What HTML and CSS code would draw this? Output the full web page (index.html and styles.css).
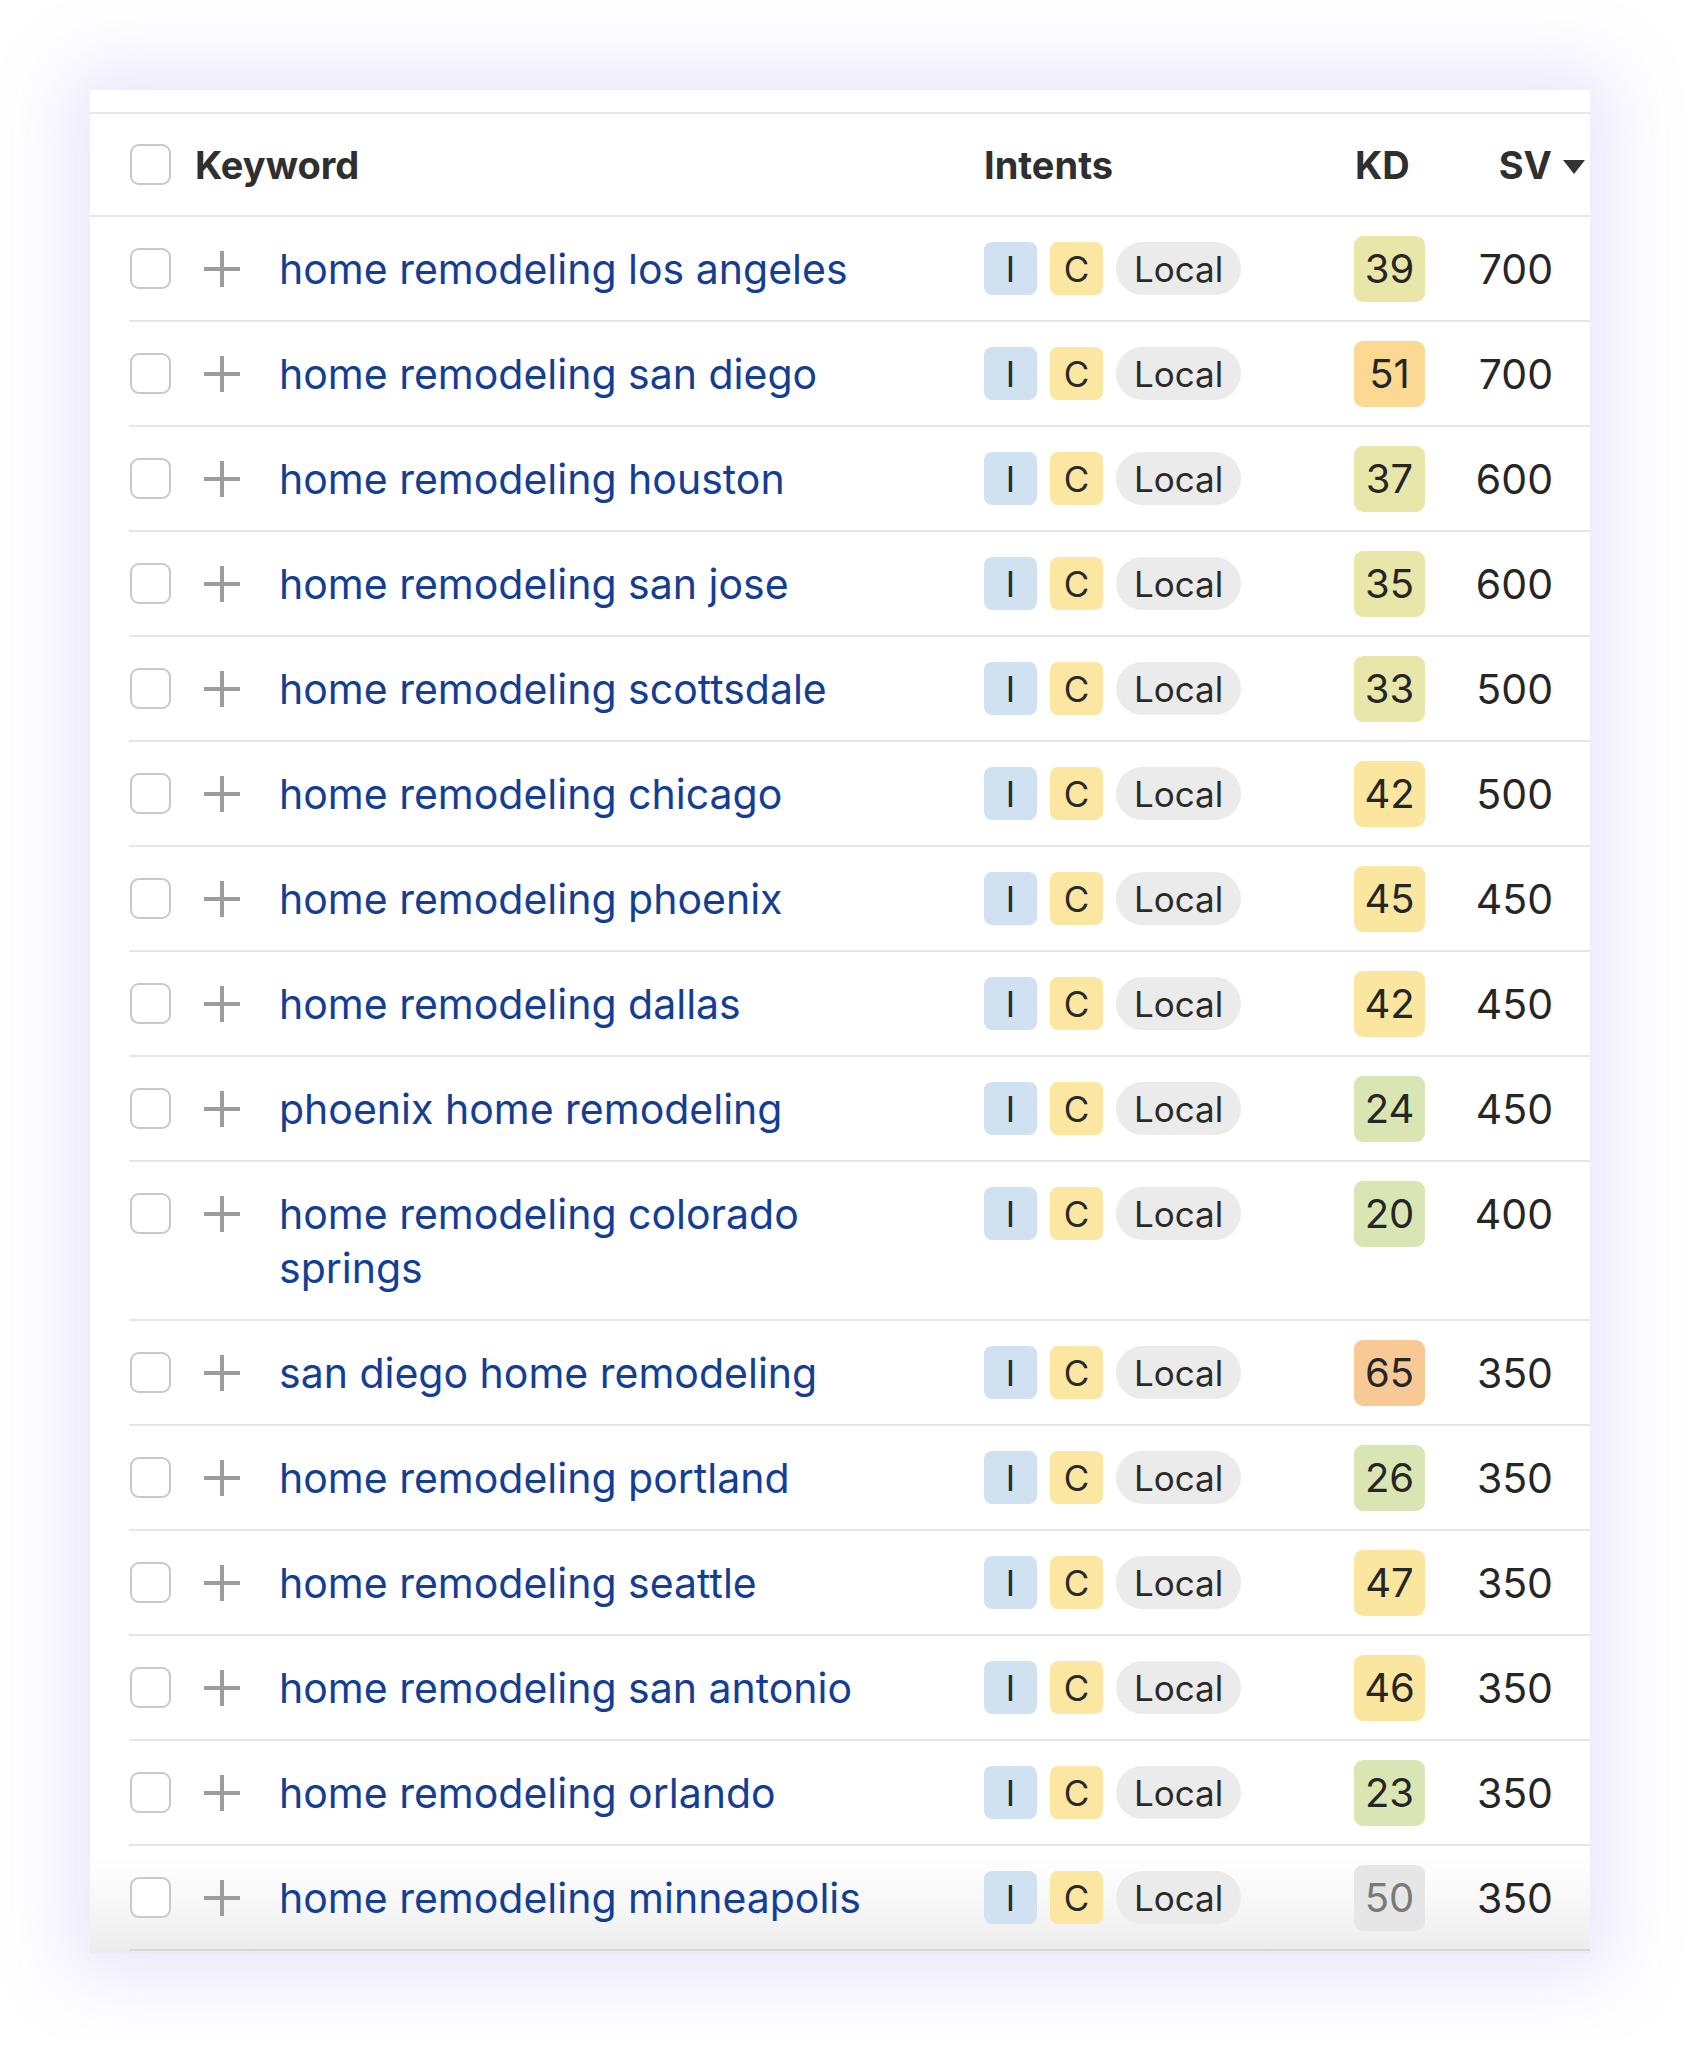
FILE: index.html
```html
<!DOCTYPE html>
<html lang="en">
<head>
<meta charset="utf-8">
<title>Keywords</title>
<link rel="stylesheet" href="styles.css">
</head>
<body>
<div class="card">
  <div class="strip"></div>
  <div class="head">
    <span class="cb"></span>
    <div class="h-kw">Keyword</div>
    <div class="h-int">Intents</div>
    <div class="h-kd">KD</div>
    <div class="h-sv">SV<span class="tri"></span></div>
  </div>
  <div class="rows">
    <div class="row"><div class="c-cb"><span class="cb"></span></div><div class="c-plus"><span class="plus"></span></div><div class="kw">home remodeling los angeles</div><div class="ints"><span class="chip i">I</span><span class="chip c">C</span><span class="chip l">Local</span></div><div class="kd"><span class="badge k3">39</span></div><div class="sv">700</div></div>
    <div class="row"><div class="c-cb"><span class="cb"></span></div><div class="c-plus"><span class="plus"></span></div><div class="kw">home remodeling san diego</div><div class="ints"><span class="chip i">I</span><span class="chip c">C</span><span class="chip l">Local</span></div><div class="kd"><span class="badge k5">51</span></div><div class="sv">700</div></div>
    <div class="row"><div class="c-cb"><span class="cb"></span></div><div class="c-plus"><span class="plus"></span></div><div class="kw">home remodeling houston</div><div class="ints"><span class="chip i">I</span><span class="chip c">C</span><span class="chip l">Local</span></div><div class="kd"><span class="badge k3">37</span></div><div class="sv">600</div></div>
    <div class="row"><div class="c-cb"><span class="cb"></span></div><div class="c-plus"><span class="plus"></span></div><div class="kw">home remodeling san jose</div><div class="ints"><span class="chip i">I</span><span class="chip c">C</span><span class="chip l">Local</span></div><div class="kd"><span class="badge k3">35</span></div><div class="sv">600</div></div>
    <div class="row"><div class="c-cb"><span class="cb"></span></div><div class="c-plus"><span class="plus"></span></div><div class="kw">home remodeling scottsdale</div><div class="ints"><span class="chip i">I</span><span class="chip c">C</span><span class="chip l">Local</span></div><div class="kd"><span class="badge k3">33</span></div><div class="sv">500</div></div>
    <div class="row"><div class="c-cb"><span class="cb"></span></div><div class="c-plus"><span class="plus"></span></div><div class="kw">home remodeling chicago</div><div class="ints"><span class="chip i">I</span><span class="chip c">C</span><span class="chip l">Local</span></div><div class="kd"><span class="badge k4">42</span></div><div class="sv">500</div></div>
    <div class="row"><div class="c-cb"><span class="cb"></span></div><div class="c-plus"><span class="plus"></span></div><div class="kw">home remodeling phoenix</div><div class="ints"><span class="chip i">I</span><span class="chip c">C</span><span class="chip l">Local</span></div><div class="kd"><span class="badge k4">45</span></div><div class="sv">450</div></div>
    <div class="row"><div class="c-cb"><span class="cb"></span></div><div class="c-plus"><span class="plus"></span></div><div class="kw">home remodeling dallas</div><div class="ints"><span class="chip i">I</span><span class="chip c">C</span><span class="chip l">Local</span></div><div class="kd"><span class="badge k4">42</span></div><div class="sv">450</div></div>
    <div class="row"><div class="c-cb"><span class="cb"></span></div><div class="c-plus"><span class="plus"></span></div><div class="kw">phoenix home remodeling</div><div class="ints"><span class="chip i">I</span><span class="chip c">C</span><span class="chip l">Local</span></div><div class="kd"><span class="badge k2">24</span></div><div class="sv">450</div></div>
    <div class="row"><div class="c-cb"><span class="cb"></span></div><div class="c-plus"><span class="plus"></span></div><div class="kw">home remodeling colorado springs</div><div class="ints"><span class="chip i">I</span><span class="chip c">C</span><span class="chip l">Local</span></div><div class="kd"><span class="badge k2">20</span></div><div class="sv">400</div></div>
    <div class="row"><div class="c-cb"><span class="cb"></span></div><div class="c-plus"><span class="plus"></span></div><div class="kw">san diego home remodeling</div><div class="ints"><span class="chip i">I</span><span class="chip c">C</span><span class="chip l">Local</span></div><div class="kd"><span class="badge k6">65</span></div><div class="sv">350</div></div>
    <div class="row"><div class="c-cb"><span class="cb"></span></div><div class="c-plus"><span class="plus"></span></div><div class="kw">home remodeling portland</div><div class="ints"><span class="chip i">I</span><span class="chip c">C</span><span class="chip l">Local</span></div><div class="kd"><span class="badge k2">26</span></div><div class="sv">350</div></div>
    <div class="row"><div class="c-cb"><span class="cb"></span></div><div class="c-plus"><span class="plus"></span></div><div class="kw">home remodeling seattle</div><div class="ints"><span class="chip i">I</span><span class="chip c">C</span><span class="chip l">Local</span></div><div class="kd"><span class="badge k4">47</span></div><div class="sv">350</div></div>
    <div class="row"><div class="c-cb"><span class="cb"></span></div><div class="c-plus"><span class="plus"></span></div><div class="kw">home remodeling san antonio</div><div class="ints"><span class="chip i">I</span><span class="chip c">C</span><span class="chip l">Local</span></div><div class="kd"><span class="badge k4">46</span></div><div class="sv">350</div></div>
    <div class="row"><div class="c-cb"><span class="cb"></span></div><div class="c-plus"><span class="plus"></span></div><div class="kw">home remodeling orlando</div><div class="ints"><span class="chip i">I</span><span class="chip c">C</span><span class="chip l">Local</span></div><div class="kd"><span class="badge k2">23</span></div><div class="sv">350</div></div>
    <div class="row last"><div class="c-cb"><span class="cb"></span></div><div class="c-plus"><span class="plus"></span></div><div class="kw">home remodeling minneapolis</div><div class="ints"><span class="chip i">I</span><span class="chip c">C</span><span class="chip l">Local</span></div><div class="kd"><span class="badge kg">50</span></div><div class="sv">350</div></div>
  </div>
</div>
</body>
</html>
```

FILE: styles.css
```css
* { box-sizing: border-box; }
html, body { margin: 0; background: #ffffff; }
body {
  padding: 90px 110px 90px 90px;
  font-family: "Inter", "Roboto", "Liberation Sans", sans-serif;
  color: #2c2c2c;
}
.card {
  width: 1500px;
  padding-bottom: 3px;
  background: linear-gradient(to bottom, #ffffff 0, #ffffff calc(100% - 100px), #f7f7f7 calc(100% - 50px), #ececec 100%);
  box-shadow: 0 0 70px 24px rgba(145, 115, 245, 0.18);
}
.strip { height: 22px; }
.head {
  display: flex;
  align-items: center;
  height: 105px;
  padding-left: 40px;
  border-top: 2px solid #e8e8e8;
  border-bottom: 2px solid #e8e8e8;
  font-weight: 700;
  font-size: 38px;
  color: #2f2f2f;
}
.cb {
  display: block;
  width: 41px;
  height: 41px;
  border: 2px solid #c9c9c9;
  border-radius: 9px;
  background: #fff;
}
.h-kw { margin-left: 24px; width: 789px; }
.h-int { width: 371px; }
.h-kd { width: 100px; }
.h-sv {
  flex: 1;
  display: flex;
  align-items: center;
  justify-content: flex-end;
  padding-right: 5px;
}
.tri {
  width: 0;
  height: 0;
  margin-left: 11px;
  margin-top: 4px;
  border-left: 11px solid transparent;
  border-right: 11px solid transparent;
  border-top: 14px solid #333;
}
.row {
  display: flex;
  align-items: flex-start;
  margin-left: 39px;
  border-bottom: 2px solid #e6e6e6;
}
.row.last { border-bottom-color: #d8d8d8; }
.c-cb, .c-plus, .ints, .kd, .sv {
  height: 103px;
  display: flex;
  align-items: center;
}
.c-cb { width: 42px; padding-left: 1px; }
.c-plus { width: 36px; margin-left: 33px; }
.plus {
  display: block;
  width: 36px;
  height: 36px;
  background:
    linear-gradient(#9c9c9c, #9c9c9c) center / 36px 4px no-repeat,
    linear-gradient(#9c9c9c, #9c9c9c) center / 4px 36px no-repeat;
}
.kw {
  width: 705px;
  margin-left: 39px;
  padding: 25px 80px 24px 0;
  font-size: 41px;
  line-height: 54px;
  color: #143e93;
}
.ints {
  width: 370px;
  gap: 13px;
}
.chip {
  height: 53px;
  display: flex;
  align-items: center;
  justify-content: center;
  font-size: 35px;
  color: #2a2a2a;
}
.chip.i { width: 53px; background: #d0e1f2; border-radius: 8px; }
.chip.c { width: 53px; background: #fbe7a1; border-radius: 8px; }
.chip.l { width: 125px; background: #ebebeb; border-radius: 27px; }
.kd { width: 100px; }
.badge {
  width: 71px;
  height: 66px;
  border-radius: 9px;
  display: flex;
  align-items: center;
  justify-content: center;
  font-size: 40px;
  color: #262626;
}
.k2 { background: #d9e6b3; }
.k3 { background: #e8e6a8; }
.k4 { background: #fbe6a0; }
.k5 { background: #fbd993; }
.k6 { background: #f8c995; }
.kg { background: #e6e6e6; color: #7a7a7a; }
.sv {
  flex: 1;
  justify-content: flex-end;
  padding-right: 37px;
  font-size: 41px;
  color: #262626;
}
```
